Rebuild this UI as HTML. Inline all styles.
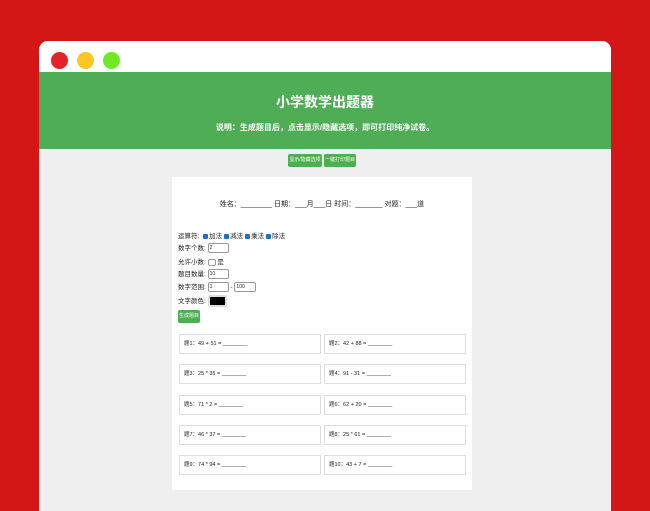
<html><head><style>
body{margin:0;width:650px;height:500px;background:#d31616;font-family:"Liberation Sans","Noto Sans CJK SC",sans-serif;position:relative;overflow:hidden}
.win{position:absolute;left:39px;top:41px;width:572px;height:470px;background:#efefef;border-radius:9px 9px 0 0;overflow:hidden}
.bar{height:31px;background:#fff;position:relative}
.dot{position:absolute;top:11px;width:17px;height:17px;border-radius:50%}
.hdr{height:77px;background:#4fad55;color:#fff;text-align:center}
.hdr h1{margin:0;padding-top:20px;font-size:14px;font-weight:bold}
.hdr p{margin:10px 0 0;font-size:8px;font-weight:bold}
.btn{position:absolute;background:#4caf50;color:#fff;font-size:5px;border-radius:2px;line-height:13px;text-align:center}
.card{position:absolute;left:133px;top:136px;width:300px;height:313px;background:#fff;font-size:6px;color:#222}
.row{position:absolute;left:6px;font-size:6.5px}
.inp{display:inline-block;border:1px solid #999;border-radius:2px;height:8px;vertical-align:middle;font-size:5px;line-height:8px;padding-left:1px}
.cb{display:inline-block;width:5px;height:5px;background:#1a6fd6;border-radius:1px;vertical-align:middle;margin:0 1px 0 2px}
.q{position:absolute;width:142px;height:20px;border:1px solid #ddd;font-size:5.5px;line-height:19px;padding-left:4px;box-sizing:border-box;color:#222}
</style></head><body>
<div class="win">
<div class="bar"><div class="dot" style="left:12px;background:#e5212a"></div><div class="dot" style="left:38px;background:#fcc626"></div><div class="dot" style="left:64px;background:#6ee926"></div></div>
<div class="hdr"><h1>小学数学出题器</h1><p>说明：生成题目后，点击显示/隐藏选项，即可打印纯净试卷。</p></div>
<div class="btn" style="left:249px;top:113px;width:34px">显示/隐藏选项</div>
<div class="btn" style="left:285px;top:113px;width:32px">一键打印题目</div>
<div class="card">
<div style="position:absolute;top:22px;width:100%;text-align:center;font-size:7px">姓名：________ 日期：___月___日 时间：_______ 对题：___道</div>
<div class="row" style="top:53px">运算符: <span class="cb"></span>加法<span class="cb"></span>减法<span class="cb"></span>乘法<span class="cb"></span>除法</div>
<div class="row" style="top:65px">数字个数: <span class="inp" style="width:18px">2</span></div>
<div class="row" style="top:79px">允许小数: <span class="inp" style="width:5px;height:5px"></span> 是</div>
<div class="row" style="top:91px">题目数量: <span class="inp" style="width:18px">10</span></div>
<div class="row" style="top:104px">数字范围: <span class="inp" style="width:18px">1</span> - <span class="inp" style="width:19px">100</span></div>
<div class="row" style="top:118px">文字颜色: <span class="inp" style="width:14px;height:8px;background:#000;border:2px solid #ddd"></span></div>
<div class="btn" style="left:6px;top:133px;width:22px">生成题目</div>
<div class="q" style="left:7px;top:157px">题1：49 + 51 = ________</div>
<div class="q" style="left:152px;top:157px">题2：42 + 88 = ________</div>
<div class="q" style="left:7px;top:187px">题3：25 * 35 = ________</div>
<div class="q" style="left:152px;top:187px">题4：91 - 31 = ________</div>
<div class="q" style="left:7px;top:218px">题5：71 * 2 = ________</div>
<div class="q" style="left:152px;top:218px">题6：62 + 20 = ________</div>
<div class="q" style="left:7px;top:248px">题7：46 * 37 = ________</div>
<div class="q" style="left:152px;top:248px">题8：25 * 61 = ________</div>
<div class="q" style="left:7px;top:278px">题9：74 * 94 = ________</div>
<div class="q" style="left:152px;top:278px">题10：43 + 7 = ________</div>
</div>
</div>
</body></html>
